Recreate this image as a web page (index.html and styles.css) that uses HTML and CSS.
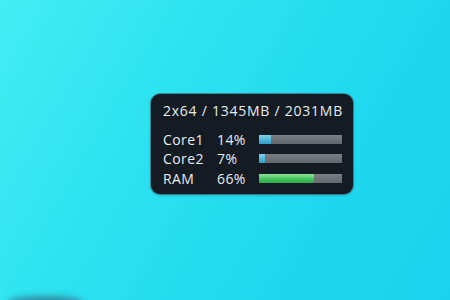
FILE: index.html
```html
<!DOCTYPE html>
<html>
<head>
<meta charset="utf-8">
<link rel="stylesheet" href="styles.css">
</head>
<body>
<div class="desktop">
  <div class="gadget">
    <div class="title">2x64 / 1345MB / 2031MB</div>
    <div class="rows">
      <div class="label">Core1</div><div class="pct">14%</div>
      <div class="track"><div class="fill blue" style="width:14%"></div></div>
      <div class="label">Core2</div><div class="pct">7%</div>
      <div class="track"><div class="fill blue" style="width:7%"></div></div>
      <div class="label">RAM</div><div class="pct">66%</div>
      <div class="track"><div class="fill green" style="width:66%"></div></div>
    </div>
  </div>
  <div class="blob"></div>
</div>
</body>
</html>
```

FILE: styles.css
```css
html, body {
  margin: 0;
  padding: 0;
}
.desktop {
  position: relative;
  width: 450px;
  height: 300px;
  overflow: hidden;
  background: linear-gradient(120deg, #42eef3 0%, #2de2f0 35%, #1fd8ef 70%, #1ad2ee 100%);
  padding-top: 94px;
  padding-left: 151px;
  box-sizing: border-box;
}
.gadget {
  width: 202px;
  height: 100px;
  box-sizing: border-box;
  background: #151b22;
  border-radius: 9px;
  box-shadow: 0 0 0 1px rgba(70, 90, 100, 0.6), 0 1px 3px rgba(0, 40, 60, 0.35);
  padding: 8px 0 0 12px;
  font-family: "Open Sans", "DejaVu Sans", sans-serif;
  color: #e6ecef;
  font-size: 14px;
}
.title {
  line-height: 18px;
  letter-spacing: 0.75px;
  white-space: nowrap;
}
.rows {
  margin-top: 10px;
  display: grid;
  grid-template-columns: 54px 42px 83px;
  grid-auto-rows: 19.5px;
  align-items: center;
}
.label, .pct {
  line-height: 18px;
  letter-spacing: 0.4px;
}
.track {
  height: 9px;
  margin-top: -1px;
  background: linear-gradient(#7a7f84, #63686d);
  position: relative;
  overflow: hidden;
}
.fill {
  height: 100%;
}
.fill.blue {
  background: linear-gradient(#7fd2ea, #2a9ec4);
}
.fill.green {
  background: linear-gradient(#8fe59a, #3fbf5a 60%, #2fa84a);
}
.blob {
  position: absolute;
  left: 8px;
  bottom: -8px;
  width: 75px;
  height: 12px;
  border-radius: 50%;
  background: rgba(50, 70, 100, 0.55);
  filter: blur(3px);
}
```
